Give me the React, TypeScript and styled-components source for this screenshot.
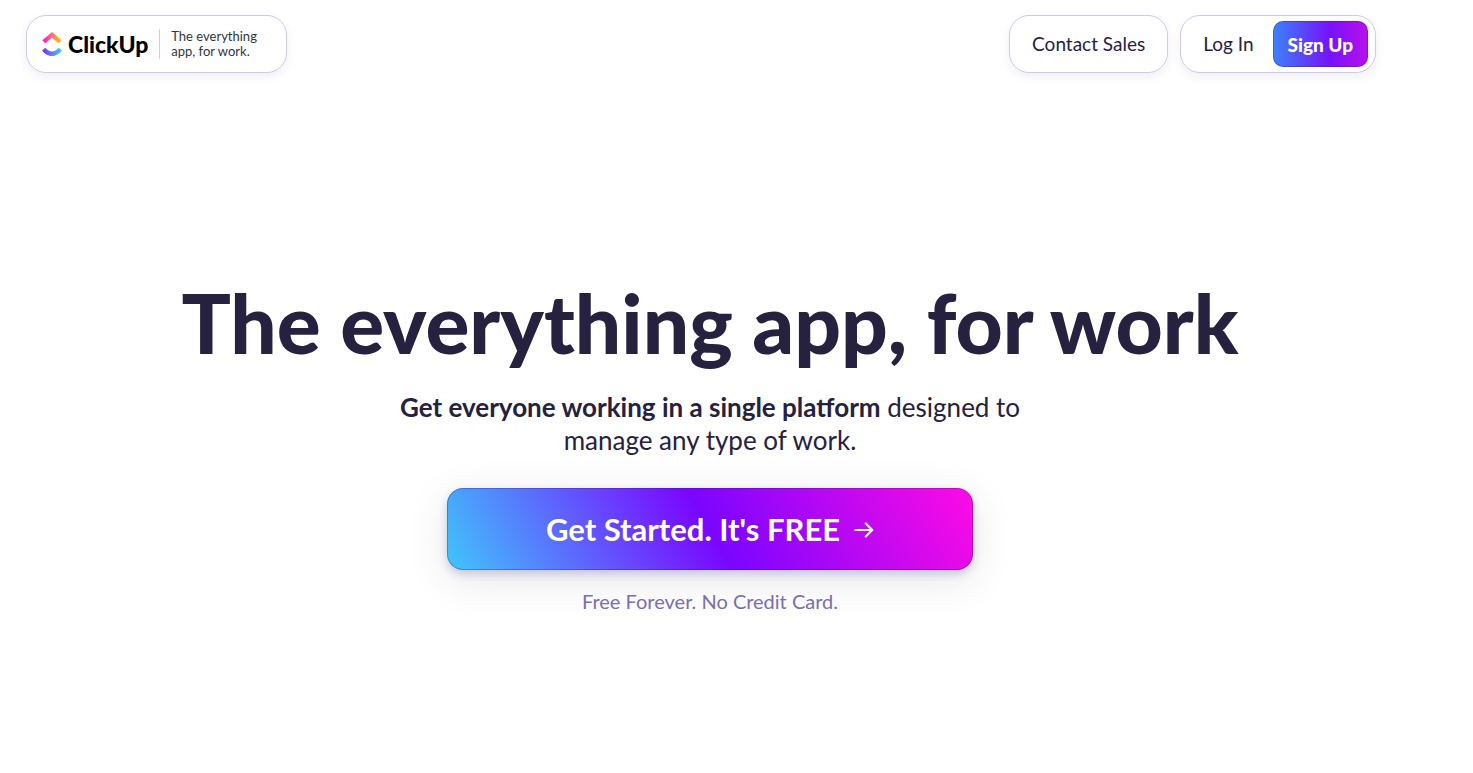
import React from "react";
import styled, { createGlobalStyle } from "styled-components";

const colors = {
  ink: "#25213f",
  slate: "#343541",
  outline: "#cfc9f0",
  muted: "#7a6fb0",
};

const GlobalStyle = createGlobalStyle`
  *, *::before, *::after {
    box-sizing: border-box;
  }
  body {
    margin: 0;
    background: #ffffff;
    color: ${colors.ink};
    font-family: Lato, "Liberation Sans", sans-serif;
  }
`;

const Page = styled.div`
  min-height: 100vh;
  padding-right: 53px;
`;

const Header = styled.header`
  display: flex;
  align-items: center;
  justify-content: space-between;
  flex-wrap: wrap;
  gap: 12px;
  padding: 15px 44px 0 26px;
`;

const Pill = styled.div`
  display: flex;
  align-items: center;
  height: 58px;
  border: 1px solid ${colors.outline};
  border-radius: 20px;
  background: #ffffff;
  box-shadow: 0 4px 10px rgba(60, 50, 130, 0.08);
`;

const BrandPill = styled(Pill)`
  padding: 0 29px 0 15px;
`;

const HomeLink = styled.a`
  display: flex;
  align-items: center;
  gap: 6px;
  color: #000000;
  text-decoration: none;
  font-size: 23px;
  font-weight: 900;
  line-height: 28px;
`;

const Tagline = styled.p`
  margin: 0 0 0 11px;
  padding-left: 11px;
  border-left: 1px solid ${colors.outline};
  color: ${colors.slate};
  font-size: 13px;
  line-height: 15px;
`;

const Actions = styled.nav`
  display: flex;
  flex-wrap: wrap;
  gap: 12px;
`;

const SalesPill = styled(Pill)`
  padding: 0 22px;
`;

const AccountPill = styled(Pill)`
  gap: 19px;
  padding: 0 7px 0 22px;
`;

const NavLink = styled.a`
  color: ${colors.ink};
  text-decoration: none;
  font-size: 19px;
  line-height: 24px;
`;

const GradientButton = styled.button`
  border: 1px solid rgba(40, 20, 120, 0.3);
  color: #ffffff;
  font-family: inherit;
  cursor: pointer;
  background-origin: border-box;
`;

const SignUpButton = styled(GradientButton)`
  height: 46px;
  padding: 0 14px;
  border-radius: 10px;
  background-image: linear-gradient(90deg, #3c82fb 0%, #7612fa 60%, #b910ea 100%);
  font-size: 19px;
  font-weight: 900;
`;

const Hero = styled.main`
  display: flex;
  flex-direction: column;
  align-items: center;
  padding: 201px 24px 40px;
  text-align: center;
`;

const Title = styled.h1`
  margin: 0;
  font-size: 82px;
  font-weight: 900;
  line-height: 96px;
`;

const Lead = styled.p`
  max-width: 660px;
  margin: 21px 0 0;
  font-size: 26px;
  line-height: 33px;
`;

const StartButton = styled(GradientButton)`
  display: flex;
  align-items: center;
  justify-content: center;
  gap: 14px;
  width: 526px;
  max-width: 100%;
  height: 82px;
  margin-top: 31px;
  border-radius: 16px;
  background-image: linear-gradient(60deg, #40c6fb 0%, #7a05ff 50%, #ff0be4 100%);
  box-shadow:
    0 4px 8px rgba(40, 30, 110, 0.2),
    0 10px 40px rgba(50, 50, 70, 0.12);
  font-size: 31px;
  font-weight: 700;
`;

const Note = styled.p`
  margin: 19px 0 0;
  color: ${colors.muted};
  font-size: 20px;
  line-height: 24px;
`;

function LogoMark() {
  return (
    <svg width="20" height="25" viewBox="0 0 20 25" fill="none" aria-hidden="true">
      <defs>
        <linearGradient id="roof" x1="0" y1="6" x2="20" y2="6" gradientUnits="userSpaceOnUse">
          <stop offset="0" stopColor="#ff02f0" />
          <stop offset="0.5" stopColor="#ff7470" />
          <stop offset="1" stopColor="#ffc800" />
        </linearGradient>
        <linearGradient id="smile" x1="0" y1="20" x2="20" y2="20" gradientUnits="userSpaceOnUse">
          <stop offset="0" stopColor="#7a28fd" />
          <stop offset="1" stopColor="#49ccf9" />
        </linearGradient>
      </defs>
      <path d="M10 0 L19.6 8.3 L16.8 11.6 L10 5.7 L3.2 11.6 L0.4 8.3 Z" fill="url(#roof)" />
      <path
        d="M3.5 15.8 C7.3 20.8 12.7 20.8 16.5 15.8 L20 18.5 C14.7 25.8 5.3 25.8 0 18.5 Z"
        fill="url(#smile)"
      />
    </svg>
  );
}

function ArrowIcon() {
  return (
    <svg width="20" height="18" viewBox="0 0 20 18" fill="none" aria-hidden="true">
      <path
        d="M1.3 10 H18 M11.8 3.5 L18.3 10 L11.8 16.5"
        stroke="#ffffff"
        strokeWidth="2.2"
        strokeLinecap="round"
        strokeLinejoin="round"
      />
    </svg>
  );
}

export default function App() {
  return (
    <>
      <GlobalStyle />
      <Page>
        <Header>
          <BrandPill>
            <HomeLink href="#home">
              <LogoMark />
              ClickUp
            </HomeLink>
            <Tagline>
              The everything
              <br />
              app, for work.
            </Tagline>
          </BrandPill>
          <Actions aria-label="Account">
            <SalesPill>
              <NavLink href="#sales">Contact Sales</NavLink>
            </SalesPill>
            <AccountPill>
              <NavLink href="#login">Log In</NavLink>
              <SignUpButton type="button">Sign Up</SignUpButton>
            </AccountPill>
          </Actions>
        </Header>
        <Hero>
          <Title>The everything app, for work</Title>
          <Lead>
            <strong>Get everyone working in a single platform</strong> designed to
            <br />
            manage any type of work.
          </Lead>
          <StartButton type="button">
            Get Started. It's FREE
            <ArrowIcon />
          </StartButton>
          <Note>Free Forever. No Credit Card.</Note>
        </Hero>
      </Page>
    </>
  );
}
